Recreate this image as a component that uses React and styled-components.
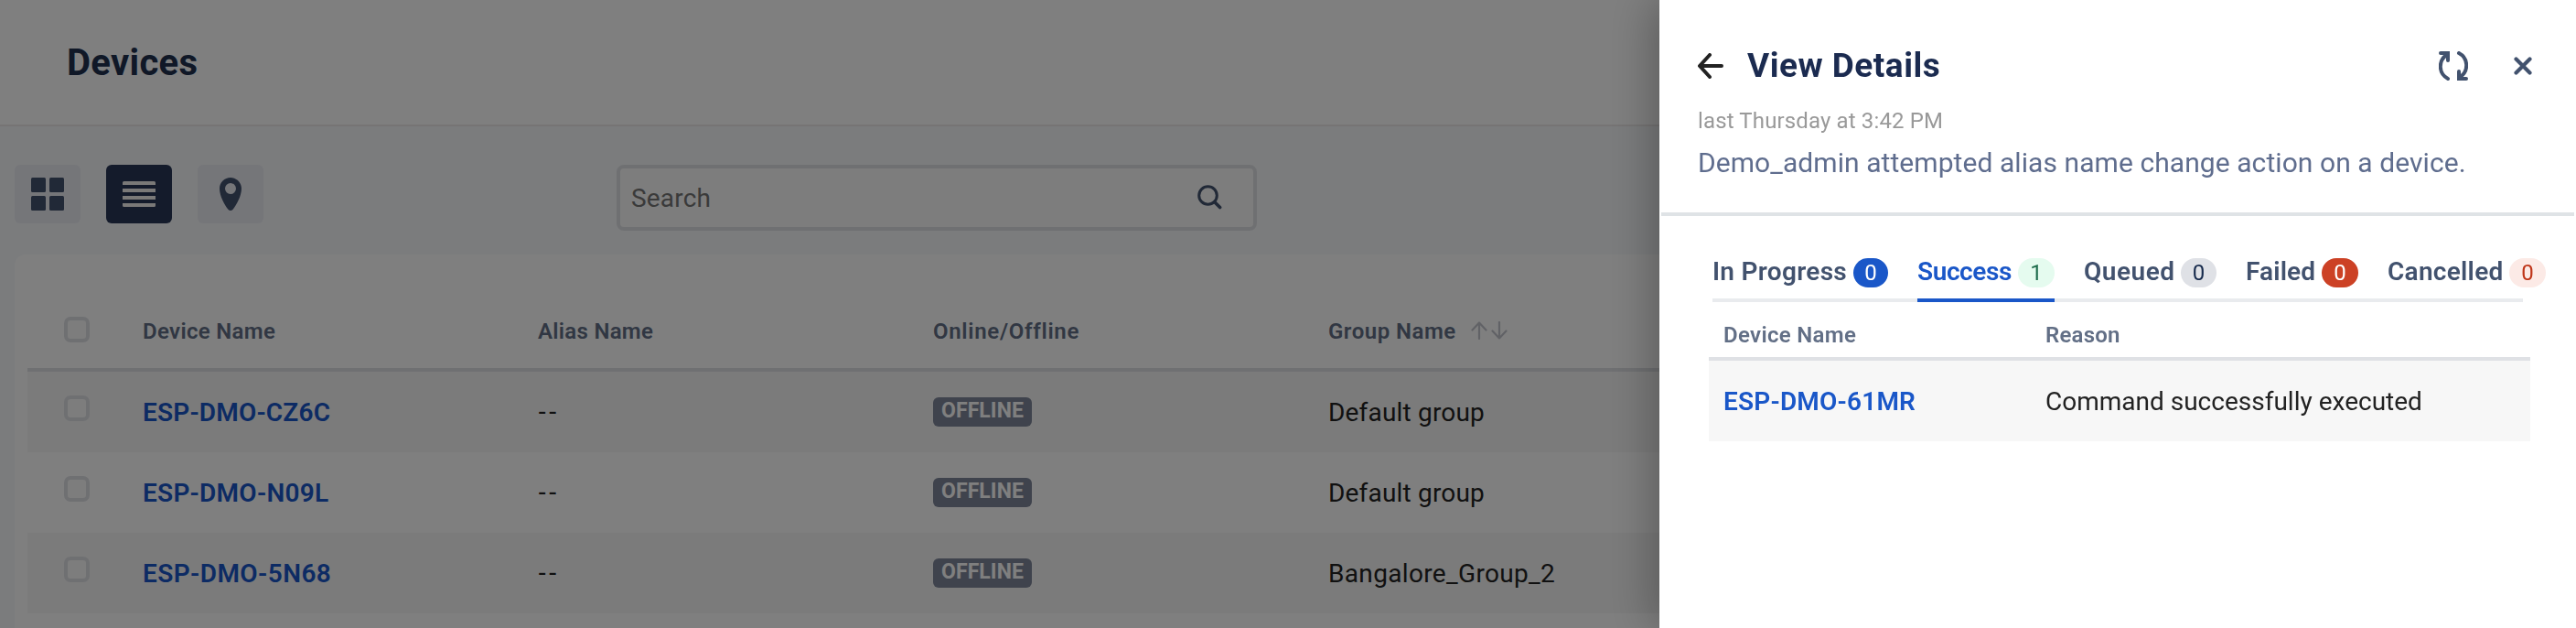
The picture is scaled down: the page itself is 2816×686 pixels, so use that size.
import React from "react";
import styled, { createGlobalStyle } from "styled-components";

const GlobalStyle = createGlobalStyle`
  * { box-sizing: border-box; }
  html, body, #root { height: 100%; }
  body {
    margin: 0;
    overflow: hidden;
    background: #f6f8fb;
    color: #222;
    font-family: Roboto, "Liberation Sans", sans-serif;
    font-size: 28px;
  }
  h1, h2, p { margin: 0; }
  button { border: 0; padding: 0; font: inherit; }
  svg { display: block; }
`;

const spacing = ({ $track = 0 }) => `${$track}px`;

/* ---------- Devices page ---------- */

const Page = styled.div`
  height: 686px;
  overflow: hidden;
`;

const PageHeader = styled.header`
  display: flex;
  align-items: center;
  height: 138px;
  padding: 1px 0 0 73px;
  background: #fff;
  border-bottom: 2px solid #ece9e9;
`;

const PageTitle = styled.h1`
  font-size: 40px;
  line-height: 48px;
  font-weight: 700;
  letter-spacing: 0.3px;
  color: #20304f;
`;

const Toolbar = styled.div`
  display: flex;
  align-items: flex-start;
  height: 140px;
  padding: 42px 16px 0;
`;

const ViewSwitch = styled.div`
  display: flex;
  gap: 28px;
  width: 658px;
`;

const ViewButton = styled.button`
  display: grid;
  place-items: center;
  width: 72px;
  height: 64px;
  border-radius: 6px;
  color: ${({ $active }) => ($active ? "#f5f2f0" : "#42526e")};
  background: ${({ $active }) => ($active ? "#293757" : "#ebecf3")};
`;

const SearchBox = styled.div`
  display: flex;
  align-items: center;
  justify-content: space-between;
  width: 700px;
  height: 72px;
  padding: 0 34px 2px 12px;
  border: 4px solid #dfe1e5;
  border-radius: 8px;
  background: #fafafa;
  color: #42526e;
`;

const Placeholder = styled.span`
  padding-top: 3px;
  line-height: 32px;
  letter-spacing: 0.18px;
  color: #757575;
`;

const Card = styled.section`
  height: 480px;
  margin-left: 16px;
  padding: 40px 0 0 14px;
  border-radius: 12px 0 0 0;
  background: #fff;
`;

const Row = styled.div`
  display: grid;
  grid-template-columns: 126px repeat(3, 432px) 1fr;
  align-items: center;
  height: 88px;
  background: ${({ $striped }) => ($striped ? "#f7f7f7" : "#fff")};
`;

const HeadRow = styled(Row)`
  border-bottom: 4px solid #dfe1e5;
  padding-top: 2px;
`;

const CheckCell = styled.div`
  padding-left: 40px;
  padding-bottom: ${({ $lift }) => $lift}px;
`;

const Checkbox = styled.div`
  width: 28px;
  height: 28px;
  border: 4px solid #dfe1e5;
  border-radius: 7px;
  background: #fafafa;
`;

const HeadCell = styled.div`
  display: flex;
  align-items: center;
  gap: 16px;
  padding-top: 2px;
  font-size: 24px;
  line-height: 32px;
  font-weight: 600;
  letter-spacing: ${spacing};
  color: #626f86;
`;

const SortIcon = styled.svg`
  color: #c3c5cd;
  margin-top: -3px;
`;

const DeviceLink = styled.span`
  padding-top: 2px;
  font-weight: 600;
  line-height: 36px;
  letter-spacing: ${spacing};
  color: #1a57c8;
`;

const Cell = styled.div`
  padding-top: 1px;
  line-height: 36px;
  letter-spacing: ${spacing};
  white-space: nowrap;
`;

const Dashes = styled(Cell)`
  padding: 0 0 2px;
  font-family: "Liberation Sans", sans-serif;
  letter-spacing: 2.2px;
`;

const StatusBadge = styled.span`
  display: flex;
  align-items: center;
  justify-content: center;
  width: 108px;
  height: 32px;
  padding-bottom: 3px;
  border-radius: 6px;
  background: #7e879a;
  color: #fff;
  font-size: 23px;
  line-height: 28px;
  font-weight: 700;
  letter-spacing: 0.08px;
`;

/* ---------- Details drawer ---------- */

const Backdrop = styled.div`
  position: fixed;
  inset: 0;
  background: rgba(0, 0, 0, 0.5);
`;

const Drawer = styled.aside`
  position: fixed;
  inset: 0 0 0 auto;
  width: 1002px;
  background: #fff;
  box-shadow: -4px 0 48px rgba(0, 0, 0, 0.32);
`;

const DrawerHeader = styled.header`
  margin: 0 2px;
  height: 236px;
  padding: 52px 0 0 40px;
  border-bottom: 4px solid #dfe3e6;
`;

const TitleBar = styled.div`
  display: flex;
  align-items: center;
  height: 40px;
  padding-right: 46px;
  color: #42526e;
`;

const DrawerTitle = styled.h2`
  flex: 1;
  margin-left: 26px;
  font-size: 37px;
  line-height: 40px;
  font-weight: 700;
  letter-spacing: 0.5px;
  color: #1b2b50;
`;

const CloseIcon = styled.svg`
  margin-left: 50px;
`;

const Timestamp = styled.p`
  margin-top: 24px;
  font-size: 24px;
  line-height: 32px;
  letter-spacing: 0.14px;
  color: #999;
`;

const Summary = styled.p`
  margin-top: 10px;
  font-size: 30px;
  line-height: 40px;
  letter-spacing: 0.07px;
  white-space: nowrap;
  color: #5f6d8e;
`;

const TabList = styled.nav`
  display: flex;
  gap: 32px;
  width: 886px;
  height: 94px;
  margin-left: 58px;
  padding-top: 46px;
  background: linear-gradient(#e9ebee, #e9ebee) bottom / 100% 4px no-repeat;
`;

const Tab = styled.div`
  display: flex;
  flex: none;
  justify-content: space-between;
  width: ${({ $width }) => $width}px;
  height: 48px;
  border-bottom: 4px solid ${({ $active }) => ($active ? "#1a57c8" : "transparent")};
  color: ${({ $active }) => ($active ? "#1a57c8" : "#42526e")};
  font-weight: 600;
  line-height: 29px;
  letter-spacing: ${spacing};
  white-space: nowrap;
`;

const Count = styled.span`
  flex: none;
  width: ${({ $width }) => $width}px;
  height: 32px;
  border-radius: 16px;
  background: ${({ $bg }) => $bg};
  color: ${({ $fg }) => $fg};
  font-size: 24px;
  line-height: 32px;
  font-weight: 400;
  letter-spacing: 0;
  text-align: center;
`;

const ResultTable = styled.div`
  width: 898px;
  margin: 12px 0 0 54px;
`;

const ResultRow = styled.div`
  display: grid;
  grid-template-columns: 352px 1fr;
  align-items: center;
  height: 88px;
  padding-left: 16px;
  background: #f7f7f7;
`;

const ResultHead = styled(ResultRow)`
  height: 52px;
  border-bottom: 4px solid #dfe1e5;
  background: #fff;
`;

const ResultHeadCell = styled(HeadCell)`
  padding-top: 0;
`;

/* ---------- Icons ---------- */

const GridIcon = () => (
  <svg width="36" height="36" fill="currentColor">
    <rect width="16" height="16" rx="1.5" />
    <rect x="20" width="16" height="16" rx="1.5" />
    <rect y="20" width="16" height="16" rx="1.5" />
    <rect x="20" y="20" width="16" height="16" rx="1.5" />
  </svg>
);

const ListIcon = () => (
  <svg width="36" height="28" fill="currentColor">
    <path d="M1.5 0h33Q36 0 36 1.5V4H0V1.5Q0 0 1.5 0ZM0 8h36v4H0ZM0 16h36v4H0ZM0 24h36v2.500Q36 28 34.500 28h-33Q0 28 0 26.500Z" />
  </svg>
);

const PinIcon = () => (
  <svg width="24" height="36" fill="currentColor" fillRule="evenodd">
    <path d="M12 0C5.400 0 0 5.200 0 12c0 8 5.500 18 9.400 22.700 1.500 1.700 3.700 1.700 5.200 0C18.500 30 24 20 24 12 24 5.200 18.600 0 12 0Zm0 6a6 6 0 1 1 0 12 6 6 0 0 1 0-12Z" />
  </svg>
);

const SearchIcon = () => (
  <svg width="27" height="27" fill="none" stroke="currentColor" strokeLinecap="round">
    <circle cx="11.500" cy="11.500" r="9.800" strokeWidth="3" />
    <path d="m18.800 18.800 5.800 5.800" strokeWidth="3.600" />
  </svg>
);

const SortArrows = () => (
  <SortIcon width="40" height="20" viewBox="0 0 40 20" fill="none" stroke="currentColor" strokeWidth="2.200" strokeLinecap="round" strokeLinejoin="round">
    <path d="M9 19V1.500M1.500 9.500 9 1.500l7.500 8" />
    <path d="M31 1v17.500M23.500 10.500l7.500 8 7.500-8" />
  </SortIcon>
);

const BackIcon = () => (
  <svg width="28" height="28" fill="none" stroke="#222" strokeWidth="4" strokeLinecap="round" strokeLinejoin="round">
    <path d="M26 14H3M13 2 2 14l11 12" />
  </svg>
);

const RefreshIcon = () => (
  <svg width="32" height="32" fill="none" stroke="currentColor" strokeWidth="4" strokeLinecap="round">
    <path d="M10 30C-.5 24.500-.8 10.500 8.500 4" />
    <path d="M22 2c10.500 5.500 10.800 19.500 1.500 26" />
    <path d="M2 2h8v8" />
    <path d="M30 30h-8v-8" />
    <path d="M5 1h6v6ZM27 31h-6v-6Z" fill="currentColor" stroke="none" />
  </svg>
);

const Close = () => (
  <CloseIcon width="20" height="20" fill="none" stroke="currentColor" strokeWidth="4.200" strokeLinecap="round">
    <path d="m2.500 2.500 15 15M17.500 2.500l-15 15" />
  </CloseIcon>
);

/* ---------- Data ---------- */

const devices = [
  { name: "ESP-DMO-CZ6C", track: 0.18, group: "Default group", groupTrack: 0.18 },
  { name: "ESP-DMO-N09L", track: 0.25, group: "Default group", groupTrack: 0.18 },
  { name: "ESP-DMO-5N68", track: 0.42, group: "Bangalore_Group_2", groupTrack: 0.34 },
];

const tabs = [
  { label: "In Progress", count: 0, width: 192, pill: 38, bg: "#1a57c8", fg: "#fff", track: 0.3 },
  { label: "Success", count: 1, width: 150, pill: 40, bg: "#e5fbef", fg: "#216e4e", track: -0.4, active: true },
  { label: "Queued", count: 0, width: 145, pill: 39, bg: "#dfe1e6", fg: "#172b4d", track: 0.5 },
  { label: "Failed", count: 0, width: 123, pill: 40, bg: "#cc4125", fg: "#fff", track: 0.15 },
  { label: "Cancelled", count: 0, width: 173, pill: 40, bg: "#fceae6", fg: "#bf3519", track: 0.28 },
];

export default function App() {
  return (
    <>
      <GlobalStyle />
      <Page>
        <PageHeader>
          <PageTitle>Devices</PageTitle>
        </PageHeader>
        <Toolbar>
          <ViewSwitch>
            <ViewButton aria-label="Grid view"><GridIcon /></ViewButton>
            <ViewButton aria-label="List view" $active><ListIcon /></ViewButton>
            <ViewButton aria-label="Map view"><PinIcon /></ViewButton>
          </ViewSwitch>
          <SearchBox>
            <Placeholder>Search</Placeholder>
            <SearchIcon />
          </SearchBox>
        </Toolbar>
        <Card>
          <HeadRow>
            <CheckCell $lift={2}><Checkbox /></CheckCell>
            <HeadCell $track={0.32}>Device Name</HeadCell>
            <HeadCell $track={0.29}>Alias Name</HeadCell>
            <HeadCell $track={0.7}>Online/Offline</HeadCell>
            <HeadCell $track={0.5}>Group Name <SortArrows /></HeadCell>
          </HeadRow>
          {devices.map((d, i) => (
            <Row key={d.name} $striped={i % 2 === 0}>
              <CheckCell $lift={8}><Checkbox /></CheckCell>
              <DeviceLink $track={d.track}>{d.name}</DeviceLink>
              <Dashes>--</Dashes>
              <div><StatusBadge>OFFLINE</StatusBadge></div>
              <Cell $track={d.groupTrack}>{d.group}</Cell>
            </Row>
          ))}
        </Card>
      </Page>
      <Backdrop />
      <Drawer>
        <DrawerHeader>
          <TitleBar>
            <BackIcon />
            <DrawerTitle>View Details</DrawerTitle>
            <RefreshIcon />
            <Close />
          </TitleBar>
          <Timestamp>last Thursday at 3:42 PM</Timestamp>
          <Summary>Demo_admin attempted alias name change action on a device.</Summary>
        </DrawerHeader>
        <TabList>
          {tabs.map((t) => (
            <Tab key={t.label} $active={t.active} $width={t.width} $track={t.track}>
              {t.label}
              <Count $width={t.pill} $bg={t.bg} $fg={t.fg}>{t.count}</Count>
            </Tab>
          ))}
        </TabList>
        <ResultTable>
          <ResultHead>
            <ResultHeadCell $track={0.32}>Device Name</ResultHeadCell>
            <ResultHeadCell $track={0.21}>Reason</ResultHeadCell>
          </ResultHead>
          <ResultRow>
            <DeviceLink $track={0.2}>ESP-DMO-61MR</DeviceLink>
            <Cell $track={0}>Command successfully executed</Cell>
          </ResultRow>
        </ResultTable>
      </Drawer>
    </>
  );
}
